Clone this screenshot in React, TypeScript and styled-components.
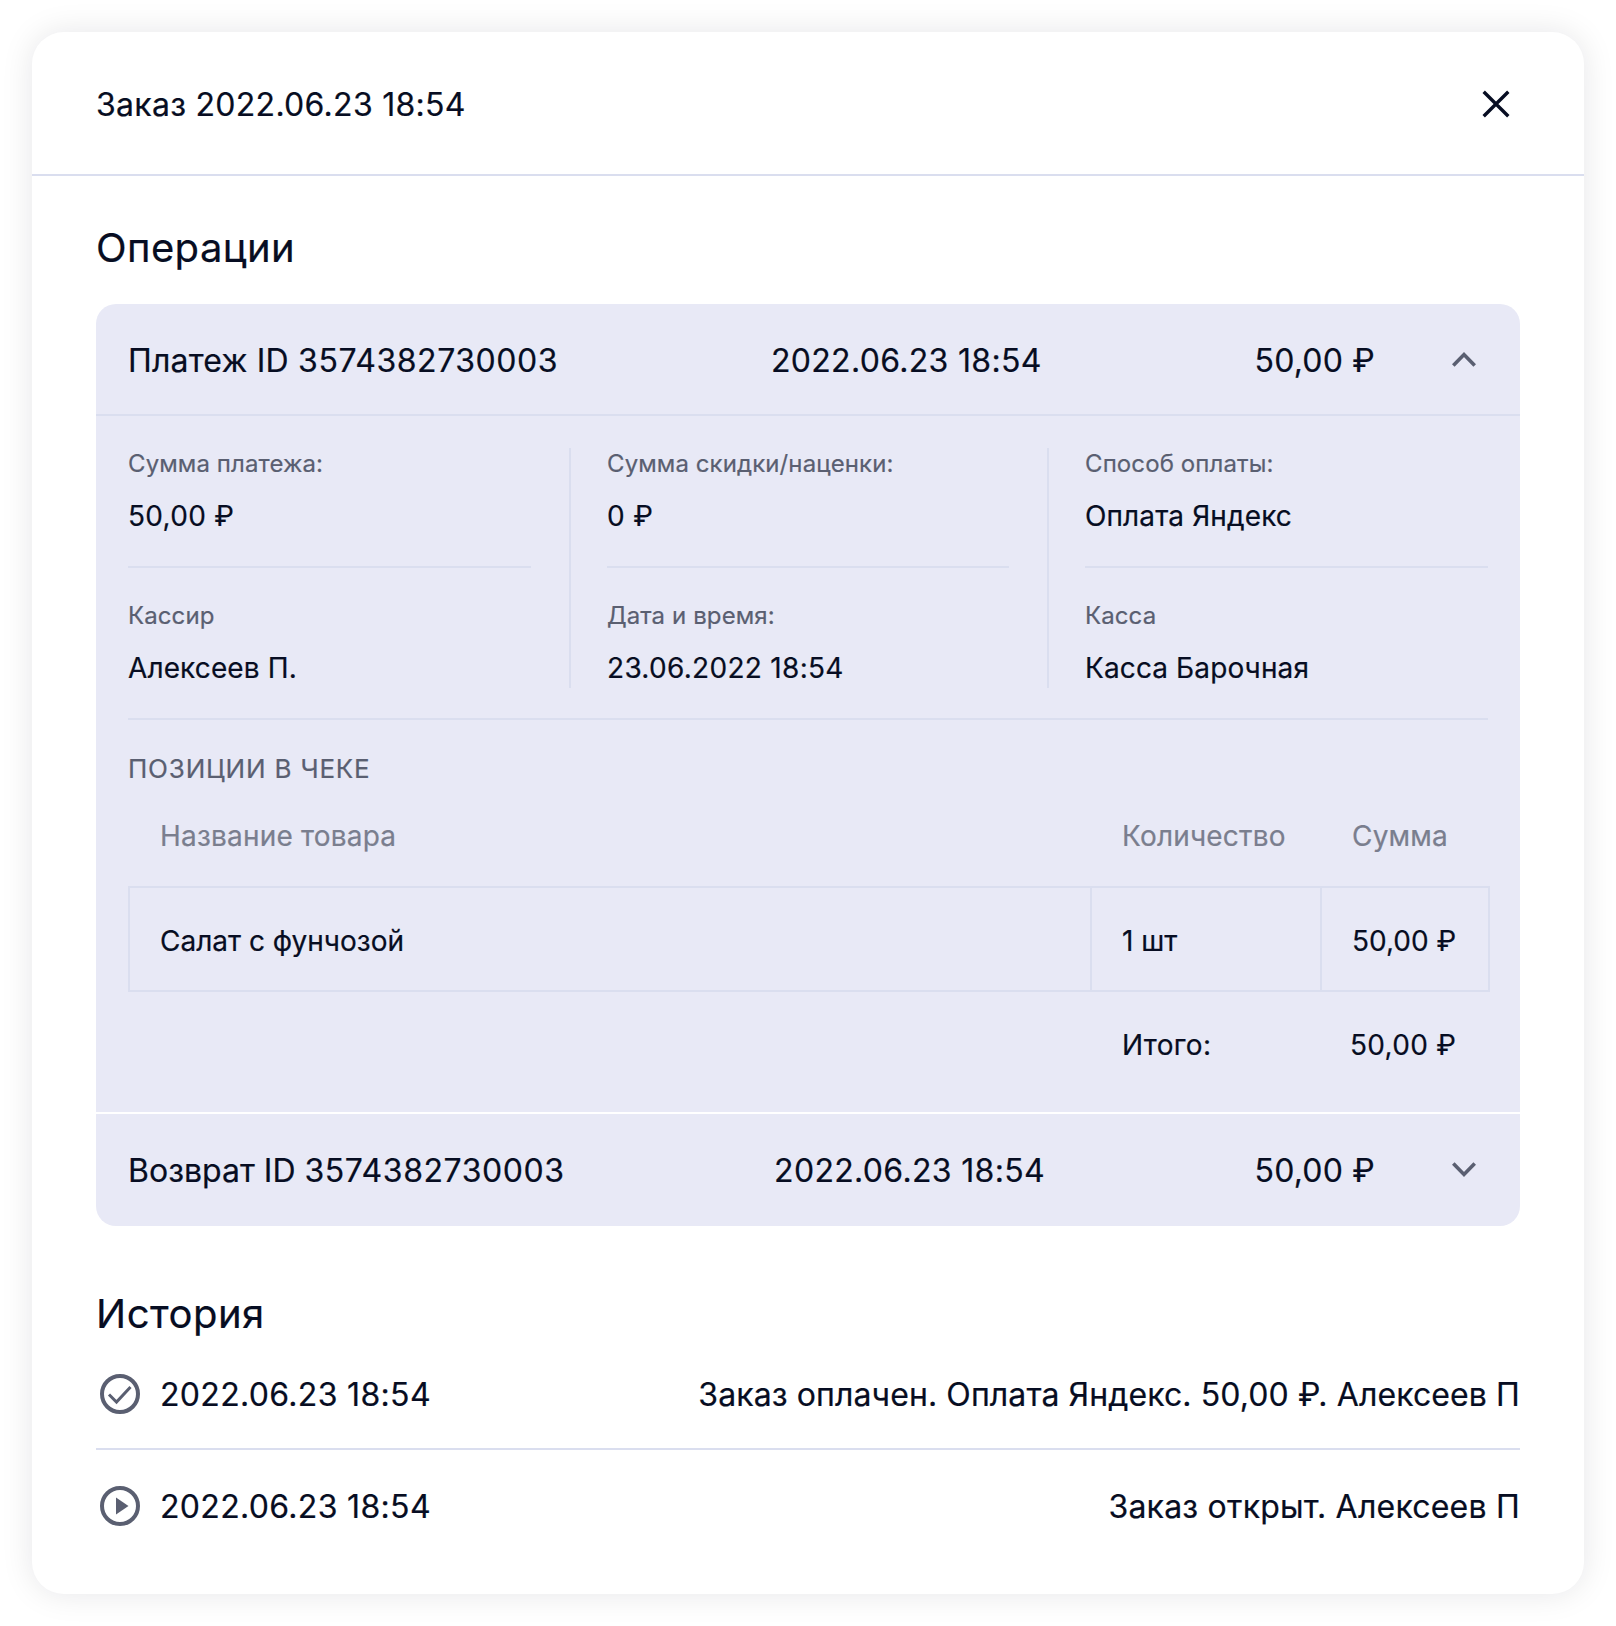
import React from "react";
import styled, { createGlobalStyle } from "styled-components";

const GlobalStyle = createGlobalStyle`
  html, body {
    margin: 0;
    padding: 0;
    background: #fff;
    font-family: Inter, "Noto Sans", sans-serif;
    color: #070d22;
    -webkit-text-stroke: 0.2px currentColor;
  }
  * {
    box-sizing: border-box;
  }
`;

const details = [
  { label: "Сумма платежа:", value: "50,00 ₽" },
  { label: "Сумма скидки/наценки:", value: "0 ₽" },
  { label: "Способ оплаты:", value: "Оплата Яндекс" },
  { label: "Кассир", value: "Алексеев П." },
  { label: "Дата и время:", value: "23.06.2022 18:54" },
  { label: "Касса", value: "Касса Барочная" },
];

const CheckIcon = () => (
  <svg width="48" height="48" viewBox="0 0 48 48" fill="none" stroke="#5a5f71" strokeWidth="4">
    <circle cx="24" cy="24" r="18" />
    <path d="M13 24.5l7.5 7.5L34.5 17" strokeWidth="3" />
  </svg>
);

const PlayIcon = () => (
  <svg width="48" height="48" viewBox="0 0 48 48" fill="none" stroke="#5a5f71" strokeWidth="4">
    <circle cx="24" cy="24" r="18" />
    <path d="M20 15.5l12.5 8.5L20 32.5z" fill="#5a5f71" stroke="none" />
  </svg>
);

const Chevron = ({ up }: { up?: boolean }) => (
  <svg width="24" height="24" viewBox="0 0 24 24" fill="none" stroke="#5a5f71" strokeWidth="3.6">
    <path d={up ? "M1.3 17.5L12 6.5 22.7 17.5" : "M1.3 6.5L12 17.5 22.7 6.5"} />
  </svg>
);

const Page = styled.div`
  width: 1616px;
  height: 1626px;
  padding: 32px;
  overflow: hidden;
`;
const Card = styled.div`
  width: 1552px;
  height: 1562px;
  background: #fff;
  border-radius: 32px;
  box-shadow: 0 0 32px rgba(7, 13, 34, 0.1);
`;
const Header = styled.div`
  height: 144px;
  padding: 0 73px 0 64px;
  display: flex;
  align-items: center;
  justify-content: space-between;
  border-bottom: 2px solid #dadeef;
`;
const Title = styled.div`
  padding-top: 4px;
  font-size: 32px;
  line-height: 40px;
  letter-spacing: 0.28px;
`;
const CloseIcon = styled.svg`
  display: block;
  margin-top: 2px;
`;
const Body = styled.div`
  padding: 48px 64px 0;
`;
const SectionTitle = styled.h2`
  margin: 0 0 32px;
  font-size: 40px;
  line-height: 48px;
  font-weight: 400;
  letter-spacing: 0.4px;
`;
const Accordion = styled.div`
  background: #e8e9f6;
  border-radius: 20px;
  height: 922px;
`;
const OperationName = styled.div`
  letter-spacing: 0.2px;
`;
const Digits = styled.span`
  letter-spacing: 0.55px;
`;
const OperationRow = styled.div`
  height: 112px;
  padding: 3px 44px 0 32px;
  display: flex;
  align-items: center;
  justify-content: space-between;
  border-bottom: 2px solid #dadeef;
  font-size: 32px;
`;
const ReturnRow = styled(OperationRow)`
  height: 114px;
  padding-top: 0;
  border-bottom: 0;
  border-top: 2px solid #fff;
  ${OperationName} {
    letter-spacing: 0;
  }
`;
const OperationDate = styled.div`
  letter-spacing: 0.32px;
`;
const OperationRight = styled.div`
  display: flex;
  align-items: center;
  gap: 77px;
  svg {
    margin-top: -2px;
  }
`;
const OperationSum = styled.div`
  white-space: nowrap;
  letter-spacing: 0.2px;
`;
const Details = styled.div`
  padding: 32px 32px 0;
  height: 696px;
`;
const InfoGrid = styled.div`
  display: grid;
  grid-template-columns: 443px 478px 1fr;
  padding-bottom: 30px;
  border-bottom: 2px solid #dadeef;
`;
const InfoCell = styled.div<{ $column: number }>`
  padding-left: ${(p) => (p.$column === 0 ? "0" : "36px")};
  padding-right: ${(p) => (p.$column === 2 ? "0" : "38px")};
  border-right: ${(p) => (p.$column === 2 ? "none" : "2px solid #dadeef")};
`;
const InfoInner = styled.div<{ $bottom: boolean }>`
  height: ${(p) => (p.$bottom ? "88px" : "120px")};
  margin-bottom: ${(p) => (p.$bottom ? "0" : "32px")};
  border-bottom: ${(p) => (p.$bottom ? "none" : "2px solid #dadeef")};
`;
const InfoLabel = styled.div`
  font-size: 24px;
  line-height: 32px;
  letter-spacing: 0.1px;
  color: #5a5f71;
`;
const InfoValue = styled.div<{ $digits: boolean }>`
  margin-top: 18px;
  font-size: 28px;
  line-height: 36px;
  letter-spacing: ${(p) => (p.$digits ? "0.3px" : "0.12px")};
`;
const Positions = styled.div`
  padding-top: 31px;
`;
const PositionsTitle = styled.div`
  font-size: 26px;
  line-height: 36px;
  letter-spacing: 0.8px;
  color: #5a5f71;
`;
const TableHead = styled.div`
  display: grid;
  grid-template-columns: 962px 230px 170px;
  margin-top: 14px;
  height: 85px;
  padding-bottom: 15px;
  align-items: center;
`;
const HeadCell = styled.div`
  padding-left: 32px;
  font-size: 28px;
  letter-spacing: 0.2px;
  color: #7a7e8e;
`;
const TableRow = styled.div`
  display: grid;
  grid-template-columns: 962px 230px 1fr;
  width: 1362px;
  height: 106px;
  border: 2px solid #dadeef;
`;
const RowCell = styled.div`
  display: flex;
  align-items: center;
  padding: 3px 0 0 30px;
  font-size: 28px;
  border-right: 2px solid #dadeef;
  &:last-child {
    border-right: 0;
  }
`;
const TotalRow = styled.div`
  display: grid;
  grid-template-columns: 964px 230px 1fr;
  height: 106px;
`;
const TotalCell = styled.div`
  display: flex;
  align-items: center;
  padding-left: 30px;
  font-size: 28px;
  letter-spacing: 0.3px;
  white-space: nowrap;
`;
const TotalSum = styled(TotalCell)`
  padding-left: 28px;
`;
const HistoryTitle = styled.h2`
  margin: 64px 0 0;
  font-size: 40px;
  line-height: 48px;
  font-weight: 400;
  letter-spacing: 0.5px;
`;
const HistoryRow = styled.div`
  margin-top: 2px;
  height: 110px;
  display: flex;
  align-items: center;
  justify-content: space-between;
  border-bottom: 2px solid #dadeef;
`;
const HistoryRowLast = styled.div`
  height: 112px;
  display: flex;
  align-items: center;
  justify-content: space-between;
`;
const HistoryLeft = styled.div`
  display: flex;
  align-items: center;
  gap: 16px;
`;
const HistoryDate = styled.div`
  font-size: 32px;
  letter-spacing: 0.32px;
`;
const HistoryText = styled.div`
  font-size: 32px;
  letter-spacing: 0.1px;
`;
const HistoryTextShort = styled(HistoryText)`
  letter-spacing: 0.22px;
`;

const App: React.FC = () => {
  return (
    <Page>
      <GlobalStyle />
      <Card>
        <Header>
          <Title>Заказ 2022.06.23 18:54</Title>
          <CloseIcon width="30" height="30" viewBox="0 0 30 30" fill="none" stroke="#070d22" strokeWidth="3.4">
            <path d="M2.7 2.7l24.6 24.6M27.3 2.7L2.7 27.3" />
          </CloseIcon>
        </Header>
        <Body>
          <SectionTitle>Операции</SectionTitle>
          <Accordion>
            <OperationRow>
              <OperationName>
                Платеж ID <Digits>3574382730003</Digits>
              </OperationName>
              <OperationDate>2022.06.23 18:54</OperationDate>
              <OperationRight>
                <OperationSum>50,00 ₽</OperationSum>
                <Chevron up />
              </OperationRight>
            </OperationRow>
            <Details>
              <InfoGrid>
                {details.map((item, index) => (
                  <InfoCell key={item.label} $column={index % 3}>
                    <InfoInner $bottom={index > 2}>
                      <InfoLabel>{item.label}</InfoLabel>
                      <InfoValue $digits={/\d/.test(item.value)}>{item.value}</InfoValue>
                    </InfoInner>
                  </InfoCell>
                ))}
              </InfoGrid>
              <Positions>
                <PositionsTitle>ПОЗИЦИИ В ЧЕКЕ</PositionsTitle>
                <TableHead>
                  <HeadCell>Название товара</HeadCell>
                  <HeadCell>Количество</HeadCell>
                  <HeadCell>Сумма</HeadCell>
                </TableHead>
                <TableRow>
                  <RowCell>Салат с фунчозой</RowCell>
                  <RowCell>1 шт</RowCell>
                  <RowCell>50,00 ₽</RowCell>
                </TableRow>
                <TotalRow>
                  <span />
                  <TotalCell>Итого:</TotalCell>
                  <TotalSum>50,00 ₽</TotalSum>
                </TotalRow>
              </Positions>
            </Details>
            <ReturnRow>
              <OperationName>
                Возврат ID <Digits>3574382730003</Digits>
              </OperationName>
              <OperationDate>2022.06.23 18:54</OperationDate>
              <OperationRight>
                <OperationSum>50,00 ₽</OperationSum>
                <Chevron />
              </OperationRight>
            </ReturnRow>
          </Accordion>
          <HistoryTitle>История</HistoryTitle>
          <HistoryRow>
            <HistoryLeft>
              <CheckIcon />
              <HistoryDate>2022.06.23 18:54</HistoryDate>
            </HistoryLeft>
            <HistoryText>Заказ оплачен. Оплата Яндекс. 50,00 ₽. Алексеев П</HistoryText>
          </HistoryRow>
          <HistoryRowLast>
            <HistoryLeft>
              <PlayIcon />
              <HistoryDate>2022.06.23 18:54</HistoryDate>
            </HistoryLeft>
            <HistoryTextShort>Заказ открыт. Алексеев П</HistoryTextShort>
          </HistoryRowLast>
        </Body>
      </Card>
    </Page>
  );
};

export default App;
